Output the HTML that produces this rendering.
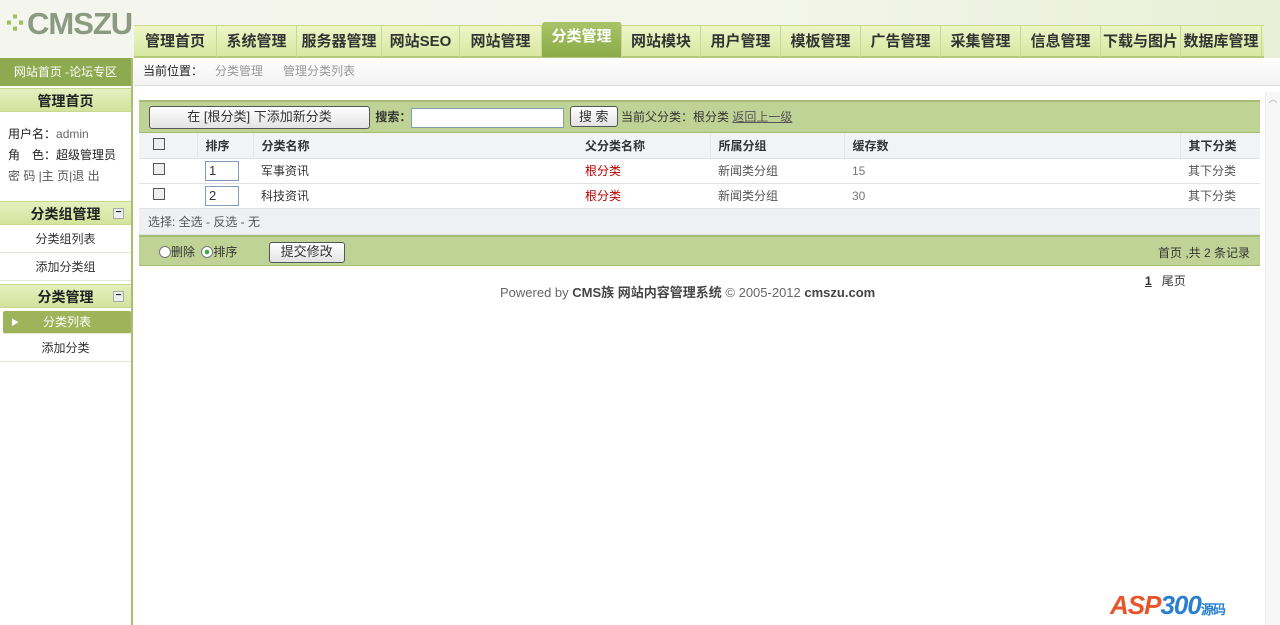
<!DOCTYPE html>
<html><head><meta charset="utf-8"><style>
*{margin:0;padding:0;box-sizing:border-box}
body{width:1280px;height:625px;overflow:hidden;background:#fff;font-family:"Liberation Sans","Noto Sans CJK SC",sans-serif;font-size:12px;color:#333;position:relative}
.abs{position:absolute}
#top{left:0;top:0;width:1280px;height:58px;background:linear-gradient(90deg,#f4f6ee,#f3f5ea 60%,#e9efd6)}
.logo{left:2px;top:6px;font:bold 31px "Liberation Sans",sans-serif;color:#8b9a80;letter-spacing:-1px}
.logo span{color:#9fc05c}
#tabs{left:134px;top:25px;height:33px;width:1130px;background:linear-gradient(#eef5c8,#d8e8a0);border-top:1px solid #c8d98a;border-bottom:2px solid #b6c97a;display:flex}
#tabs div{height:31px;line-height:31px;font-size:15px;font-weight:bold;color:#333;border-right:1px solid #c9d89a;text-align:center;flex:0 0 auto}
#tabs div.on{background:linear-gradient(#a8c468,#8aab48);color:#fff;margin-top:-4px;height:35px;line-height:29px;border-radius:3px 3px 0 0}
#side{left:0;top:58px;width:133px;height:567px;background:#fff;border-right:2px solid #a9bf70}
.sh{background:#8eaa50;color:#fff;height:28px;line-height:28px;text-align:center;font-size:12px}
.gh{background:linear-gradient(#e6efc0,#d3e39c);height:24px;line-height:24px;text-align:center;font-size:14px;font-weight:bold;color:#222;border-top:1px solid #c8d890;border-bottom:1px solid #c8d890;position:relative}
.gh i{position:absolute;right:7px;top:6px;width:11px;height:11px;border:1px solid #aaa;background:#eee;font-style:normal;line-height:8px;font-size:10px}
.it{height:28px;line-height:28px;text-align:center;color:#333;border-bottom:1px solid #e2e8d0}
#crumb{left:134px;top:58px;width:1146px;height:28px;background:linear-gradient(#fff,#f2f2f2);border-bottom:1px solid #ddd;line-height:26px;padding-left:9px}
#crumb b{font-weight:normal;color:#222}
#crumb span{color:#999;padding:0 8px 0 12px}
#main{left:139px;top:100px;width:1121px}
.bar{background:#c0d396;border-top:2px solid #a5bc72;border-bottom:1px solid #a5bc72}
table{border-collapse:collapse;width:100%}
td,th{height:25px;border-bottom:1px solid #e0e3e6;text-align:left;font-size:12px}
th{background:#f2f3f5}
.cb{display:inline-block;width:12px;height:12px;border:1px solid #555;background:#eee}
.inp{display:inline-block;width:34px;height:20px;border:1px solid #7f9db9;padding-left:3px;line-height:18px;font-size:13px}
.btn{display:inline-block;border:1px solid #555;border-radius:3px;background:linear-gradient(#fff,#e3e3e3);text-align:center}
</style></head><body>
<div id="top" class="abs"></div>
<div class="abs logo"><span>⁘</span>CMSZU</div>
<div id="tabs" class="abs">
<div style="width:83px">管理首页</div><div style="width:80px">系统管理</div><div style="width:85px">服务器管理</div><div style="width:78px">网站SEO</div><div style="width:82px">网站管理</div><div class="on" style="width:80px">分类管理</div><div style="width:79px">网站模块</div><div style="width:80px">用户管理</div><div style="width:80px">模板管理</div><div style="width:80px">广告管理</div><div style="width:80px">采集管理</div><div style="width:80px">信息管理</div><div style="width:80px">下载与图片</div><div style="width:81px">数据库管理</div>
</div>
<div id="side" class="abs">
<div class="sh">网站首页 -论坛专区</div>
<div class="gh" style="margin-top:2px">管理首页</div>
<div style="padding:12px 0 0 8px;line-height:21px;color:#222">用户名：<span style="color:#666">admin</span><br>角　色：超级管理员<br><span style="color:#555">密 码 |主 页|退 出</span></div>
<div class="gh" style="margin-top:14px">分类组管理<i>−</i></div>
<div class="it">分类组列表</div><div class="it">添加分类组</div>
<div class="gh" style="margin-top:3px">分类管理<i>−</i></div>
<div class="it" style="background:#9fb45a;color:#fff;margin:3px 0 0 3px;height:23px;line-height:23px;border-radius:2px;position:relative"><span style="position:absolute;left:8px;font-size:8px">▶</span>分类列表</div>
<div class="it">添加分类</div>
</div>
<div id="crumb" class="abs"><b>当前位置：</b><span>分类管理</span><span>管理分类列表</span></div>
<div class="abs" style="left:1265px;top:92px;width:15px;height:533px;background:#f7f7f7;border-left:1px solid #eee"><div style="color:#aaa;font-size:9px;text-align:center">︿</div></div>
<div id="main" class="abs">
<div class="bar" style="height:33px;padding:4px 0 0 10px;white-space:nowrap">
<span class="btn" style="width:221px;height:23px;line-height:20px;font-size:13px">在 [根分类] 下添加新分类</span>
<span style="font-weight:bold;margin-left:2px">搜索：</span><span style="display:inline-block;width:153px;height:20px;border:1px solid #7f9db9;background:#fff;vertical-align:middle"></span>
<span class="btn" style="width:48px;height:21px;line-height:19px;font-size:13px;margin-left:2px">搜 索</span> 当前父分类：根分类 <span style="text-decoration:underline;color:#555">返回上一级</span>
</div>
<table>
<tr><th style="width:58px;padding-left:14px"><span class="cb"></span></th><th style="width:56px;padding-left:8px;border-left:1px solid #e6e6e6">排序</th><th style="width:324px;padding-left:8px;border-left:1px solid #e6e6e6">分类名称</th><th style="width:133px;padding-left:8px">父分类名称</th><th style="width:134px;padding-left:8px;border-left:1px solid #e6e6e6">所属分组</th><th style="padding-left:8px;border-left:1px solid #e6e6e6">缓存数</th><th style="width:80px;padding-left:8px;border-left:1px solid #e6e6e6">其下分类</th></tr>
<tr><td style="padding-left:14px"><span class="cb"></span></td><td style="padding-left:8px"><span class="inp">1</span></td><td style="padding-left:8px">军事资讯</td><td style="padding-left:8px;color:#b00">根分类</td><td style="padding-left:8px;color:#555">新闻类分组</td><td style="padding-left:8px;color:#777">15</td><td style="padding-left:8px;color:#555">其下分类</td></tr>
<tr><td style="padding-left:14px"><span class="cb"></span></td><td style="padding-left:8px"><span class="inp">2</span></td><td style="padding-left:8px">科技资讯</td><td style="padding-left:8px;color:#b00">根分类</td><td style="padding-left:8px;color:#555">新闻类分组</td><td style="padding-left:8px;color:#777">30</td><td style="padding-left:8px;color:#555">其下分类</td></tr>
<tr><td colspan="7" style="background:#eef0f3;padding-left:9px;color:#555;height:26px">选择: 全选 - 反选 - 无</td></tr>
</table>
<div class="bar" style="height:31px;position:relative;padding:5px 0 0 20px">
<span style="display:inline-block;width:12px;height:12px;border:1px solid #777;border-radius:50%;vertical-align:middle;background:#fff"></span>删除
<span style="display:inline-block;width:12px;height:12px;border:1px solid #777;border-radius:50%;vertical-align:middle;background:radial-gradient(#4a4 30%,#fff 35%);margin-left:3px"></span>排序
<span class="btn" style="width:76px;height:21px;line-height:18px;font-size:13px;margin-left:28px">提交修改</span>
<span style="position:absolute;right:10px;top:7px">首页 ,共 2 条记录</span>
</div>
</div>
<div class="abs" style="left:500px;top:282px;font-size:13px;color:#666">Powered by <b style="color:#444">CMS族</b> <b style="color:#444">网站内容管理系统</b> © 2005-2012 <b style="color:#444">cmszu.com</b></div>
<div class="abs" style="left:1145px;top:272px"><b style="text-decoration:underline">1</b>&nbsp;&nbsp; 尾页</div>
<div class="abs" style="left:1110px;top:590px;font:italic bold 26px 'Liberation Sans',sans-serif;color:#e8552a;letter-spacing:-1px">ASP<span style="color:#2a7fd0">300</span><span style="font-size:13px;color:#2a7fd0;font-style:normal">源码</span></div>
</body></html>
